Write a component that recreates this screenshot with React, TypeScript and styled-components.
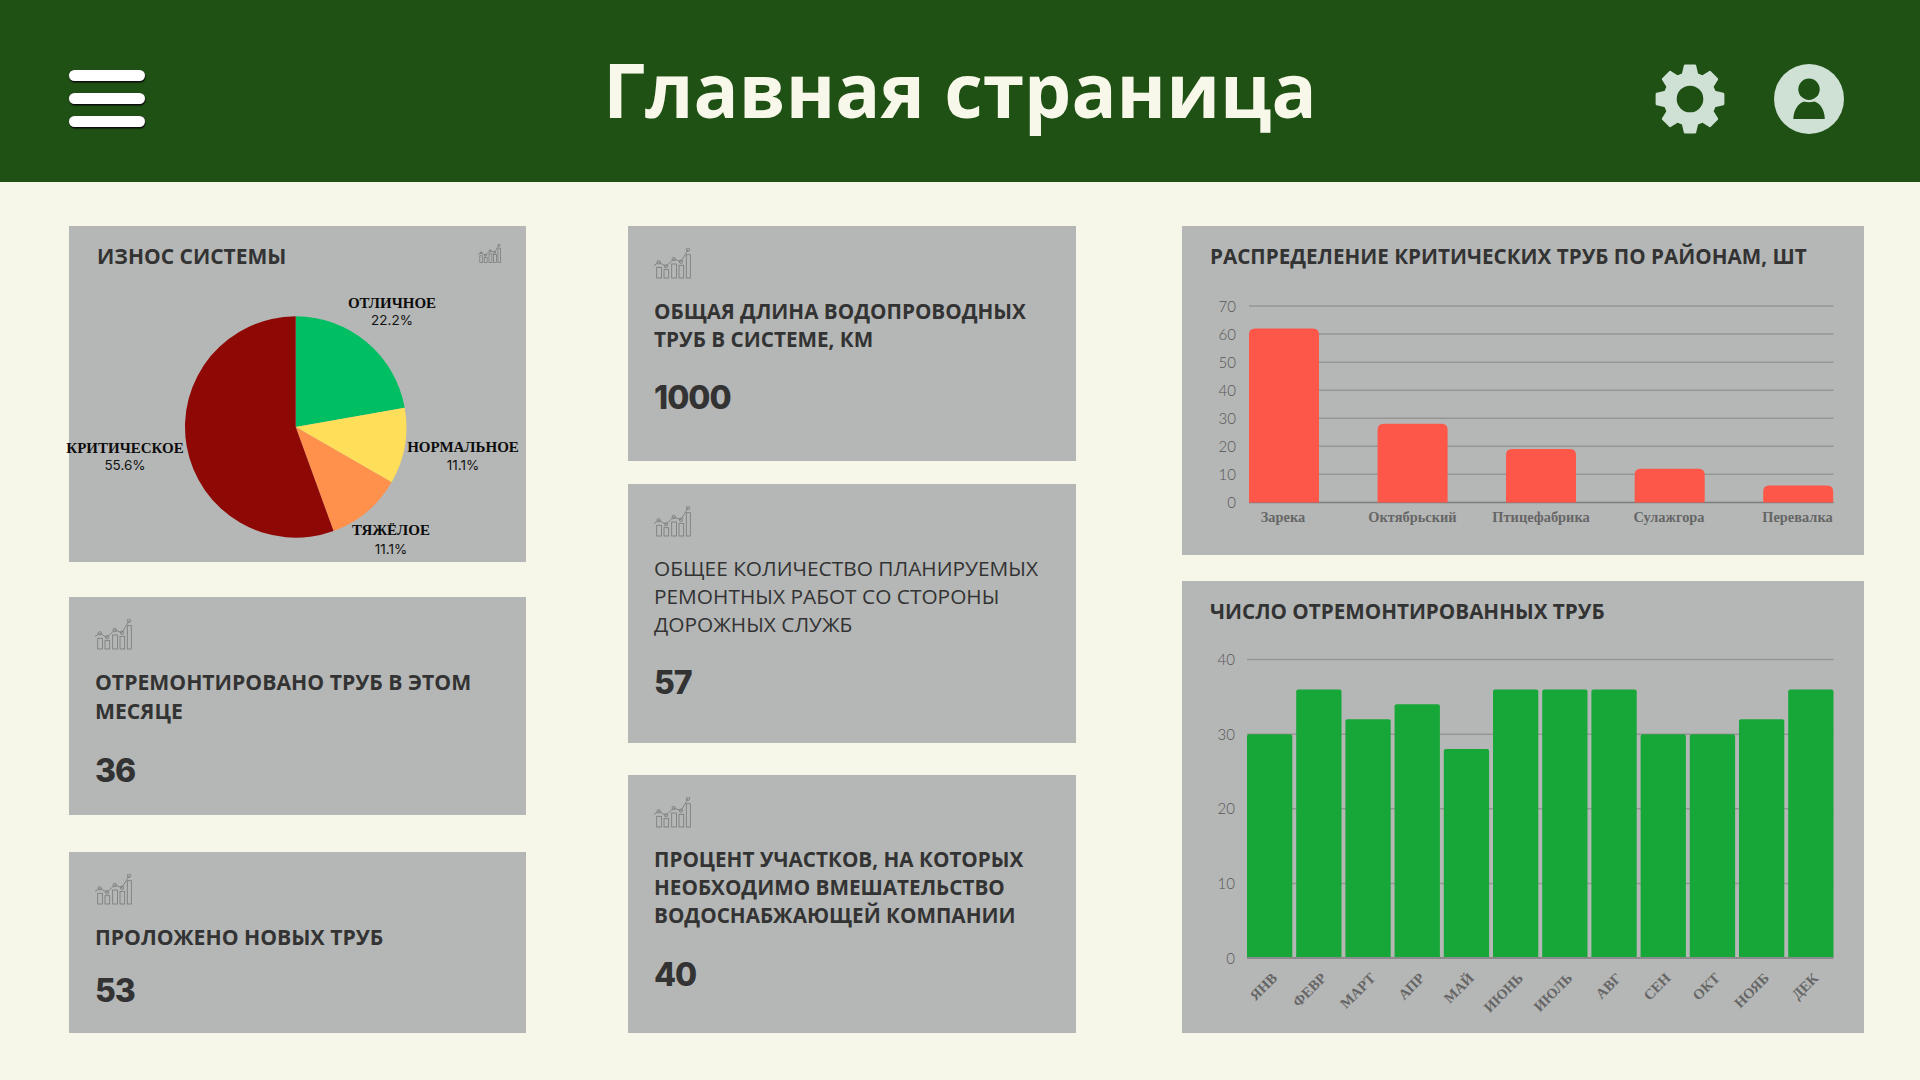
import React from "react";
import styled, { createGlobalStyle } from "styled-components";

const GlobalStyle = createGlobalStyle`
  html, body {
    margin: 0;
    padding: 0;
    background: #f6f7e9;
    overflow: hidden;
  }
  * {
    box-sizing: border-box;
  }
`;

const Page = styled.div`
  width: 1920px;
  height: 1080px;
  background: #f6f7e9;
  font-family: "Open Sans", "Liberation Sans", sans-serif;
  color: #333;
`;

const Header = styled.header`
  height: 182px;
  padding: 0 76px 0 69px;
  background: #1f5014;
  display: grid;
  grid-template-columns: 1fr auto 1fr;
  align-items: center;
`;

const Burger = styled.div`
  width: 76px;
  margin-top: 15px;
  display: flex;
  flex-direction: column;
  gap: 12px;
`;

const BurgerBar = styled.span`
  display: block;
  height: 11px;
  border-radius: 6px;
  background: #fff;
  box-shadow: 0.5px 1.5px 1px #0c0c0c, 0 0 1px #444;
`;

const PageTitle = styled.h1`
  margin: 0 0 2px 7px;
  font-size: 74.8px;
  line-height: 1.2;
  font-weight: 700;
  color: #f8f8ea;
  white-space: nowrap;
`;

const HeaderIcons = styled.div`
  display: flex;
  justify-content: flex-end;
  gap: 49px;
  margin-top: 15px;
`;

const Main = styled.main`
  padding: 44px 0 0 69px;
  display: flex;
  gap: 102px;
`;

const Column = styled.div<{ $width: number; $offset?: number }>`
  width: ${(p) => p.$width}px;
  margin-left: ${(p) => p.$offset ?? 0}px;
  display: flex;
  flex-direction: column;
`;

const Card = styled.section<{ $height: number; $gap?: number }>`
  height: ${(p) => p.$height}px;
  margin-top: ${(p) => p.$gap ?? 0}px;
  background: #b5b7b6;
  display: flex;
  flex-direction: column;
`;

const StatCard = styled(Card)`
  padding: 22px 26px 0;
`;

const StatTitle = styled.h2<{ $light?: boolean; $lh?: number; $size?: number; $top?: number }>`
  margin: ${(p) => p.$top ?? 17}px 0 0;
  font-size: ${(p) => p.$size ?? 20.7}px;
  line-height: ${(p) => p.$lh ?? 28}px;
  font-weight: ${(p) => (p.$light ? 400 : 700)};
  color: #333;
`;

const StatValue = styled.div<{ $gap?: number }>`
  margin-top: ${(p) => p.$gap ?? 28}px;
  font-family: Inter, "Liberation Sans", sans-serif;
  font-size: 32px;
  line-height: 33px;
  letter-spacing: -1px;
  font-weight: 800;
  color: #333;
`;

const ChartHead = styled.div`
  height: 60px;
  padding: 0 28px;
  display: flex;
  align-items: center;
  justify-content: space-between;
`;

const ChartTitle = styled.h2<{ $size?: number }>`
  margin: 0;
  font-size: ${(p) => p.$size ?? 20.65}px;
  font-weight: 700;
  color: #333;
  white-space: nowrap;
`;

const CornerIcon = styled.span`
  display: flex;
  margin: -5px -3px 0 0;
`;

const ChartSvg = styled.svg`
  display: block;
  overflow: visible;
`;

const SliceName = styled.text`
  font-family: "Liberation Serif", serif;
  font-size: 15px;
  font-weight: 700;
  fill: #0c0c0c;
  text-anchor: middle;
`;

const SlicePct = styled.text`
  font-family: Inter, "Liberation Sans", sans-serif;
  font-size: 13.5px;
  font-weight: 400;
  fill: #111;
  text-anchor: middle;
`;

const AxisValue = styled.text`
  font-family: Lato, "Liberation Sans", sans-serif;
  font-size: 15px;
  font-weight: 300;
  fill: #555;
  text-anchor: end;
`;

const AxisLabel = styled.text`
  font-family: "Liberation Serif", serif;
  font-size: 14.4px;
  font-weight: 700;
  fill: #666;
  text-anchor: middle;
`;

const MonthLabel = styled.text`
  font-family: "Liberation Serif", serif;
  font-size: 14.5px;
  font-weight: 700;
  fill: #666;
  text-anchor: end;
`;

const ICON_COLOR = "#cfe0d5";
const HEADER_GREEN = "#1f5014";

const gearPath = () => {
  const points: string[] = [];
  const polar = (deg: number, r: number) => {
    const a = ((deg - 90) * Math.PI) / 180;
    return `${(35 + r * Math.cos(a)).toFixed(2)} ${(35 + r * Math.sin(a)).toFixed(2)}`;
  };
  for (let i = 0; i < 8; i++) {
    const c = i * 45;
    points.push(polar(c - 16, 25.5), polar(c - 8.5, 33.5), polar(c + 8.5, 33.5), polar(c + 16, 25.5));
  }
  return `M${points.join("L")}Z`;
};

const GearIcon = () => (
  <svg width="70" height="70" viewBox="0 0 70 70">
    <path
      d={gearPath()}
      fill={ICON_COLOR}
      stroke={ICON_COLOR}
      strokeWidth="2.5"
      strokeLinejoin="round"
    />
    <circle cx="35" cy="35" r="13.3" fill={HEADER_GREEN} />
  </svg>
);

const UserIcon = () => (
  <svg width="70" height="70" viewBox="0 0 70 70">
    <circle cx="35" cy="35" r="35" fill={ICON_COLOR} />
    <path d="M19.3 55 C19.6 46 24 39.5 30 37.5 L40.5 37.5 C46.5 39.5 50.5 46 50.8 55 Z" fill={HEADER_GREEN} />
    <circle cx="35" cy="25.3" r="13" fill={ICON_COLOR} />
    <circle cx="35" cy="25.3" r="10.7" fill={HEADER_GREEN} />
  </svg>
);

const TrendIcon = ({ small }: { small?: boolean }) => (
  <svg
    width={small ? 23 : 37}
    height={small ? 19 : 31}
    viewBox="0 0 37 31"
    fill="none"
    stroke="#777"
    strokeWidth={small ? 1.2 : 0.8}
  >
    <rect x="2.7" y="19.3" width="4.7" height="10.7" />
    <rect x="10" y="21.7" width="4.7" height="8.3" />
    <rect x="17.7" y="16" width="4.7" height="14" />
    <rect x="25" y="17.3" width="4.7" height="12.7" />
    <rect x="32.3" y="6.7" width="4" height="23.3" />
    <path d="M0 17.5 L4.7 14.3 L12 18.3 L19.7 11 L27 13.7 L34 1.7" />
    <circle cx="4.7" cy="14.3" r="1.7" />
    <circle cx="12" cy="18.3" r="1.7" />
    <circle cx="19.7" cy="11" r="1.7" />
    <circle cx="27" cy="13.7" r="1.7" />
    <circle cx="34" cy="1.7" r="1.7" />
  </svg>
);

const PIE = { cx: 226.7, cy: 141, r: 110.7 };

const slicePath = (from: number, to: number) => {
  const at = (deg: number) => {
    const a = ((deg - 90) * Math.PI) / 180;
    return `${PIE.cx + PIE.r * Math.cos(a)} ${PIE.cy + PIE.r * Math.sin(a)}`;
  };
  const large = to - from > 180 ? 1 : 0;
  return `M${PIE.cx} ${PIE.cy} L${at(from)} A${PIE.r} ${PIE.r} 0 ${large} 1 ${at(to)} Z`;
};

const slices = [
  { from: 0, to: 80, color: "#00bf63" },
  { from: 80, to: 120, color: "#ffde59" },
  { from: 120, to: 160, color: "#ff914d" },
  { from: 160, to: 360, color: "#8e0805" },
];

const sliceLabels = [
  { name: "ОТЛИЧНОЕ", pct: "22.2%", x: 323, y: 22, pctY: 39 },
  { name: "НОРМАЛЬНОЕ", pct: "11.1%", x: 394, y: 166, pctY: 184 },
  { name: "КРИТИЧЕСКОЕ", pct: "55.6%", x: 56, y: 167, pctY: 184 },
  { name: "ТЯЖЁЛОЕ", pct: "11.1%", x: 322, y: 249, pctY: 268 },
];

const PieChart = () => (
  <ChartSvg width="457" height="276" viewBox="0 0 457 276">
    {slices.map((s) => (
      <path key={s.color} d={slicePath(s.from, s.to)} fill={s.color} />
    ))}
    {sliceLabels.map((l) => (
      <g key={l.name}>
        <SliceName x={l.x} y={l.y}>
          {l.name}
        </SliceName>
        <SlicePct x={l.x} y={l.pctY}>
          {l.pct}
        </SlicePct>
      </g>
    ))}
  </ChartSvg>
);

const topRounded = (x: number, y: number, w: number, bottom: number, r: number) =>
  `M${x} ${bottom} V${y + r} Q${x} ${y} ${x + r} ${y} H${x + w - r} Q${x + w} ${y} ${x + w} ${y + r} V${bottom} Z`;

const districts = [
  { name: "Зарека", value: 62, x: 67, label: 101 },
  { name: "Октябрьский", value: 28, x: 195.6, label: 230.4 },
  { name: "Птицефабрика", value: 19, x: 324, label: 359 },
  { name: "Сулажгора", value: 12, x: 452.7, label: 487 },
  { name: "Перевалка", value: 6, x: 581.2, label: 615.5 },
];

const DistrictChart = () => {
  const base = 216.4;
  const unit = 2.805;
  return (
    <ChartSvg width="682" height="269" viewBox="0 0 682 269">
      {[0, 10, 20, 30, 40, 50, 60, 70].map((v) => (
        <g key={v}>
          <line
            x1="67"
            x2="651.6"
            y1={base - v * unit}
            y2={base - v * unit}
            stroke={v === 0 ? "#7c7d7b" : "#959694"}
            strokeWidth="1.5"
          />
          <AxisValue x="54" y={base - v * unit + 5.5}>
            {v}
          </AxisValue>
        </g>
      ))}
      {districts.map((d) => (
        <g key={d.name}>
          <path d={topRounded(d.x, base - d.value * unit, 70, base, 6)} fill="#fc5748" />
          <AxisLabel x={d.label} y="236">
            {d.name}
          </AxisLabel>
        </g>
      ))}
    </ChartSvg>
  );
};

const months = [
  { name: "ЯНВ", value: 30 },
  { name: "ФЕВР", value: 36 },
  { name: "МАРТ", value: 32 },
  { name: "АПР", value: 34 },
  { name: "МАЙ", value: 28 },
  { name: "ИЮНЬ", value: 36 },
  { name: "ИЮЛЬ", value: 36 },
  { name: "АВГ", value: 36 },
  { name: "СЕН", value: 30 },
  { name: "ОКТ", value: 30 },
  { name: "НОЯБ", value: 32 },
  { name: "ДЕК", value: 36 },
];

const RepairsChart = () => {
  const base = 317;
  const unit = 7.46;
  return (
    <ChartSvg width="682" height="392" viewBox="0 0 682 392">
      {[0, 10, 20, 30, 40].map((v) => (
        <g key={v}>
          <line
            x1="65"
            x2="651.6"
            y1={base - v * unit}
            y2={base - v * unit}
            stroke={v === 0 ? "#7c7d7b" : "#959694"}
            strokeWidth="1.5"
          />
          <AxisValue x="53" y={base - v * unit + 5.5}>
            {v}
          </AxisValue>
        </g>
      ))}
      {months.map((m, i) => {
        const x = 65 + i * 49.2;
        const endX = x + 31;
        return (
          <g key={m.name}>
            <path d={topRounded(x, base - m.value * unit, 45.3, base - 1, 2)} fill="#17a738" />
            <MonthLabel x={endX} y="338" transform={`rotate(-45 ${endX} 338)`}>
              {m.name}
            </MonthLabel>
          </g>
        );
      })}
    </ChartSvg>
  );
};

export default function App() {
  return (
    <Page>
      <GlobalStyle />
      <Header>
        <Burger>
          <BurgerBar />
          <BurgerBar />
          <BurgerBar />
        </Burger>
        <PageTitle>Главная страница</PageTitle>
        <HeaderIcons>
          <GearIcon />
          <UserIcon />
        </HeaderIcons>
      </Header>
      <Main>
        <Column $width={457}>
          <Card $height={336}>
            <ChartHead>
              <ChartTitle $size={21}>ИЗНОС СИСТЕМЫ</ChartTitle>
              <CornerIcon>
                <TrendIcon small />
              </CornerIcon>
            </ChartHead>
            <PieChart />
          </Card>
          <StatCard $height={218} $gap={35}>
            <TrendIcon />
            <StatTitle $lh={29} $size={21.2}>
              ОТРЕМОНТИРОВАНО ТРУБ В ЭТОМ МЕСЯЦЕ
            </StatTitle>
            <StatValue $gap={29}>36</StatValue>
          </StatCard>
          <StatCard $height={181} $gap={37}>
            <TrendIcon />
            <StatTitle $lh={29} $size={21.2}>
              ПРОЛОЖЕНО НОВЫХ ТРУБ
            </StatTitle>
            <StatValue $gap={23}>53</StatValue>
          </StatCard>
        </Column>
        <Column $width={448}>
          <StatCard $height={235}>
            <TrendIcon />
            <StatTitle $top={18}>ОБЩАЯ ДЛИНА ВОДОПРОВОДНЫХ ТРУБ В СИСТЕМЕ, КМ</StatTitle>
            <StatValue>1000</StatValue>
          </StatCard>
          <StatCard $height={259} $gap={23}>
            <TrendIcon />
            <StatTitle $light $size={20.85}>
              ОБЩЕЕ КОЛИЧЕСТВО ПЛАНИРУЕМЫХ РЕМОНТНЫХ РАБОТ СО СТОРОНЫ ДОРОЖНЫХ СЛУЖБ
            </StatTitle>
            <StatValue>57</StatValue>
          </StatCard>
          <StatCard $height={258} $gap={32}>
            <TrendIcon />
            <StatTitle>ПРОЦЕНТ УЧАСТКОВ, НА КОТОРЫХ НЕОБХОДИМО ВМЕШАТЕЛЬСТВО ВОДОСНАБЖАЮЩЕЙ КОМПАНИИ</StatTitle>
            <StatValue $gap={29}>40</StatValue>
          </StatCard>
        </Column>
        <Column $width={682} $offset={4}>
          <Card $height={329}>
            <ChartHead>
              <ChartTitle>РАСПРЕДЕЛЕНИЕ КРИТИЧЕСКИХ ТРУБ ПО РАЙОНАМ, ШТ</ChartTitle>
            </ChartHead>
            <DistrictChart />
          </Card>
          <Card $height={452} $gap={26}>
            <ChartHead>
              <ChartTitle>ЧИСЛО ОТРЕМОНТИРОВАННЫХ ТРУБ</ChartTitle>
            </ChartHead>
            <RepairsChart />
          </Card>
        </Column>
      </Main>
    </Page>
  );
}
